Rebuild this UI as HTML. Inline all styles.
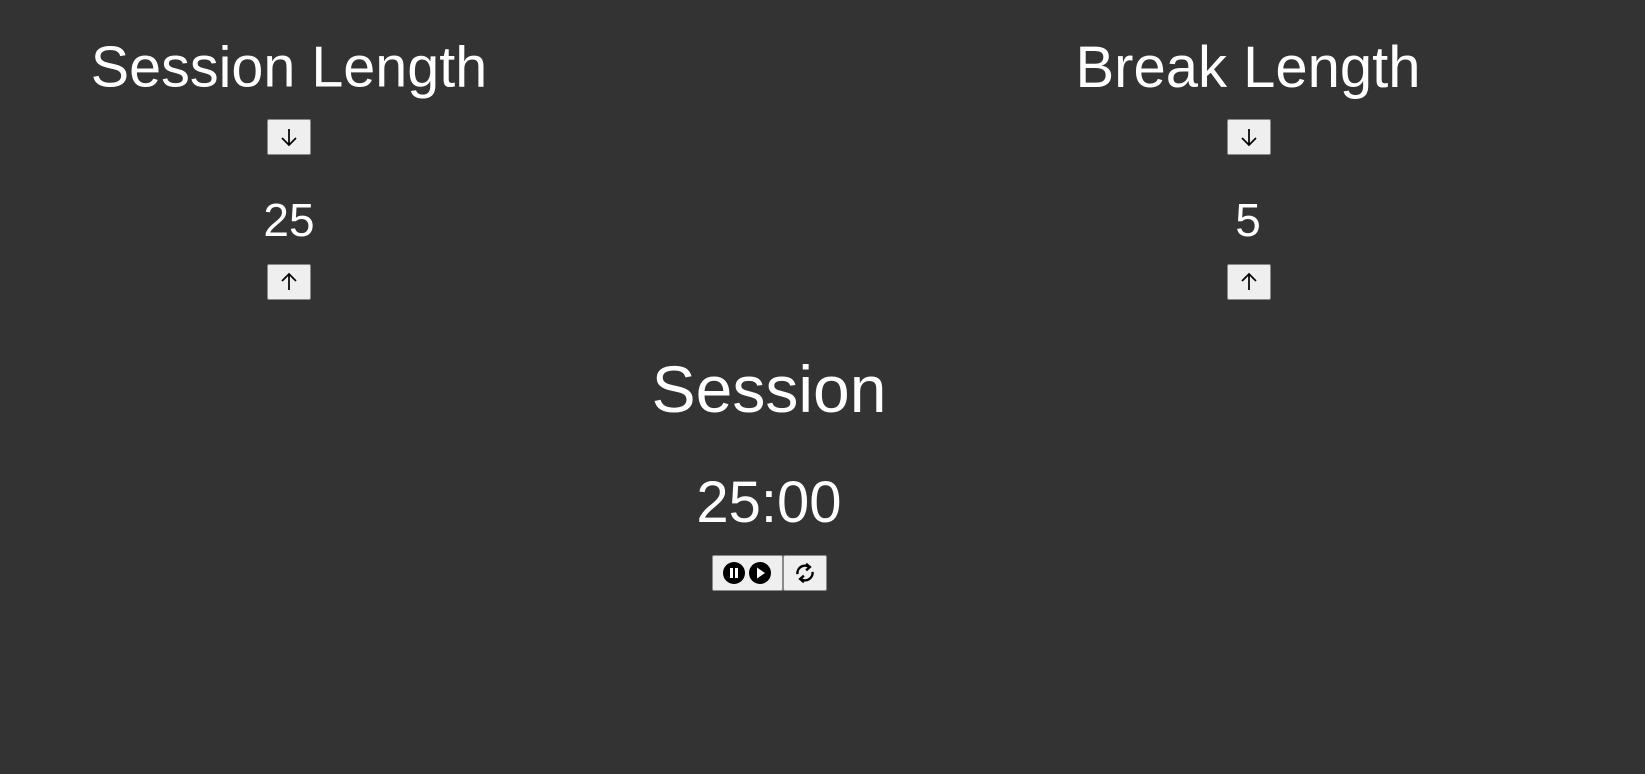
<!DOCTYPE html>
<html><head><style>
html,body{margin:0;padding:0;background:#333;width:1645px;height:774px;overflow:hidden;font-family:"Liberation Sans",sans-serif;color:#fff}
.t{position:absolute;transform:translate(-50%,-50%);white-space:nowrap;line-height:1}
.b{position:absolute;background:#efefef;border:1px solid #8a8a8a;border-radius:2px;box-sizing:border-box;display:flex;align-items:center;justify-content:center}
</style></head><body>
<div class="t" style="left:289px;top:68px;font-size:57.5px">Session Length</div>
<div class="t" style="left:1248px;top:68px;font-size:58px">Break Length</div>

<div class="b" style="left:267px;top:119px;width:44px;height:36px"><svg width="22" height="22" viewBox="0 0 22 22"><path d="M11 3v16M4 12l7 7 7-7" stroke="#000" stroke-width="1.7" fill="none"/></svg></div>
<div class="b" style="left:1227px;top:119px;width:44px;height:36px"><svg width="22" height="22" viewBox="0 0 22 22"><path d="M11 3v16M4 12l7 7 7-7" stroke="#000" stroke-width="1.7" fill="none"/></svg></div>

<div class="t" style="left:289px;top:220px;font-size:46px">25</div>
<div class="t" style="left:1248px;top:220px;font-size:46px">5</div>

<div class="b" style="left:267px;top:264px;width:44px;height:36px"><svg width="22" height="22" viewBox="0 0 22 22"><path d="M11 19V3M4 10l7-7 7 7" stroke="#000" stroke-width="1.7" fill="none"/></svg></div>
<div class="b" style="left:1227px;top:264px;width:44px;height:36px"><svg width="22" height="22" viewBox="0 0 22 22"><path d="M11 19V3M4 10l7-7 7 7" stroke="#000" stroke-width="1.7" fill="none"/></svg></div>

<div class="t" style="left:769px;top:389px;font-size:66px">Session</div>
<div class="t" style="left:769px;top:503px;font-size:58px">25:00</div>

<div class="b" style="left:712px;top:555px;width:71px;height:36px"><svg width="54" height="24" viewBox="0 0 54 24"><circle cx="13" cy="12" r="11" fill="#000"/><rect x="9" y="7" width="3" height="10" fill="#fff"/><rect x="14" y="7" width="3" height="10" fill="#fff"/><circle cx="39" cy="12" r="11" fill="#000"/><path d="M36 6.5l8 5.5-8 5.5z" fill="#fff"/></svg></div>
<div class="b" style="left:783px;top:555px;width:44px;height:36px"><svg width="26" height="26" viewBox="0 0 24 24" fill="none" stroke="#000" stroke-width="2.2"><path d="M5 13a7 7 0 0 1 11-6.5"/><path d="M13 3.5l3.5 3-3.5 3" /><path d="M19 11a7 7 0 0 1-11 6.5"/><path d="M11 20.5l-3.5-3 3.5-3"/></svg></div>
</body></html>
